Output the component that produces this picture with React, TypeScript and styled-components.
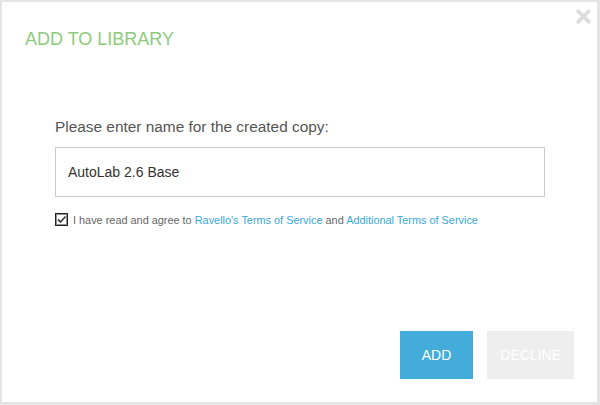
import React from 'react';
import styled, {createGlobalStyle} from 'styled-components';

const GlobalStyle = createGlobalStyle`
    html, body {
        margin: 0;
        padding: 0;
        background: #ffffff;
    }
    body {
        font-family: 'Liberation Sans', Arial, sans-serif;
    }
`;

const Dialog = styled.div`
    position: relative;
    box-sizing: border-box;
    width: 600px;
    height: 405px;
    background: #ffffff;
    border-style: solid;
    border-color: #e4e4e4;
    border-width: 2px 3px 3px 2px;
    display: flex;
    flex-direction: column;
`;

const CloseButton = styled.button`
    position: absolute;
    top: 6px;
    right: 5px;
    width: 17px;
    height: 17px;
    padding: 0;
    border: none;
    background: transparent;
    cursor: pointer;
`;

const Title = styled.h1`
    margin: 0;
    padding: 26px 0 0 23px;
    font-size: 18px;
    font-weight: normal;
    line-height: 22px;
    color: #8dcb7b;
`;

const Body = styled.div`
    padding: 67px 53px 0 53px;
    display: flex;
    flex-direction: column;
`;

const Label = styled.label`
    font-size: 15.4px;
    line-height: 20px;
    color: #555555;
`;

const NameInput = styled.input`
    box-sizing: border-box;
    margin-top: 10px;
    width: 490px;
    height: 50px;
    padding: 0 12px;
    border: 1px solid #cccccc;
    font-family: 'Liberation Sans', Arial, sans-serif;
    font-size: 14px;
    color: #333333;
    outline: none;
`;

const AgreeRow = styled.div`
    margin-top: 16px;
    display: flex;
    align-items: center;
    gap: 5px;
    font-size: 10.9px;
    color: #666666;
`;

const TermsLink = styled.a`
    color: #38a8d8;
    text-decoration: none;
`;

const Footer = styled.div`
    margin-top: auto;
    padding: 0 23px 23px 0;
    display: flex;
    justify-content: flex-end;
    gap: 14px;
`;

const ActionButton = styled.button<{$primary?: boolean}>`
    height: 48px;
    padding: 0 ${props => (props.$primary ? '22px' : '13px')};
    border: none;
    background: ${props => (props.$primary ? '#44acdb' : '#eeeeee')};
    color: #ffffff;
    font-family: 'Liberation Sans', Arial, sans-serif;
    font-size: 14px;
    text-transform: uppercase;
    cursor: pointer;
`;

const CheckIcon = () => (
    <svg width="13" height="13" viewBox="0 0 13 13">
        <rect x="0.5" y="0.5" width="12" height="12" fill="#ffffff" stroke="#222222" />
        <rect x="1.5" y="1.5" width="10" height="10" fill="none" stroke="#222222" strokeDasharray="1 1" />
        <path d="M3 6.5 L5.5 9 L10.5 3.5" fill="none" stroke="#444444" strokeWidth="1.8" />
    </svg>
);

const App = () => {
    return (
        <>
            <GlobalStyle />
            <Dialog>
                <CloseButton aria-label="close">
                    <svg width="17" height="17" viewBox="0 0 16 16">
                        <path d="M3 3 L13 13 M13 3 L3 13" stroke="#dddddd" strokeWidth="3.5" strokeLinecap="round" />
                    </svg>
                </CloseButton>
                <Title>ADD TO LIBRARY</Title>
                <Body>
                    <Label>Please enter name for the created copy:</Label>
                    <NameInput defaultValue="AutoLab 2.6 Base" />
                    <AgreeRow>
                        <CheckIcon />
                        <span>
                            I have read and agree to{' '}
                            <TermsLink href="#">Ravello's Terms of Service</TermsLink> and{' '}
                            <TermsLink href="#">Additional Terms of Service</TermsLink>
                        </span>
                    </AgreeRow>
                </Body>
                <Footer>
                    <ActionButton $primary>Add</ActionButton>
                    <ActionButton>Decline</ActionButton>
                </Footer>
            </Dialog>
        </>
    );
};

export default App;
